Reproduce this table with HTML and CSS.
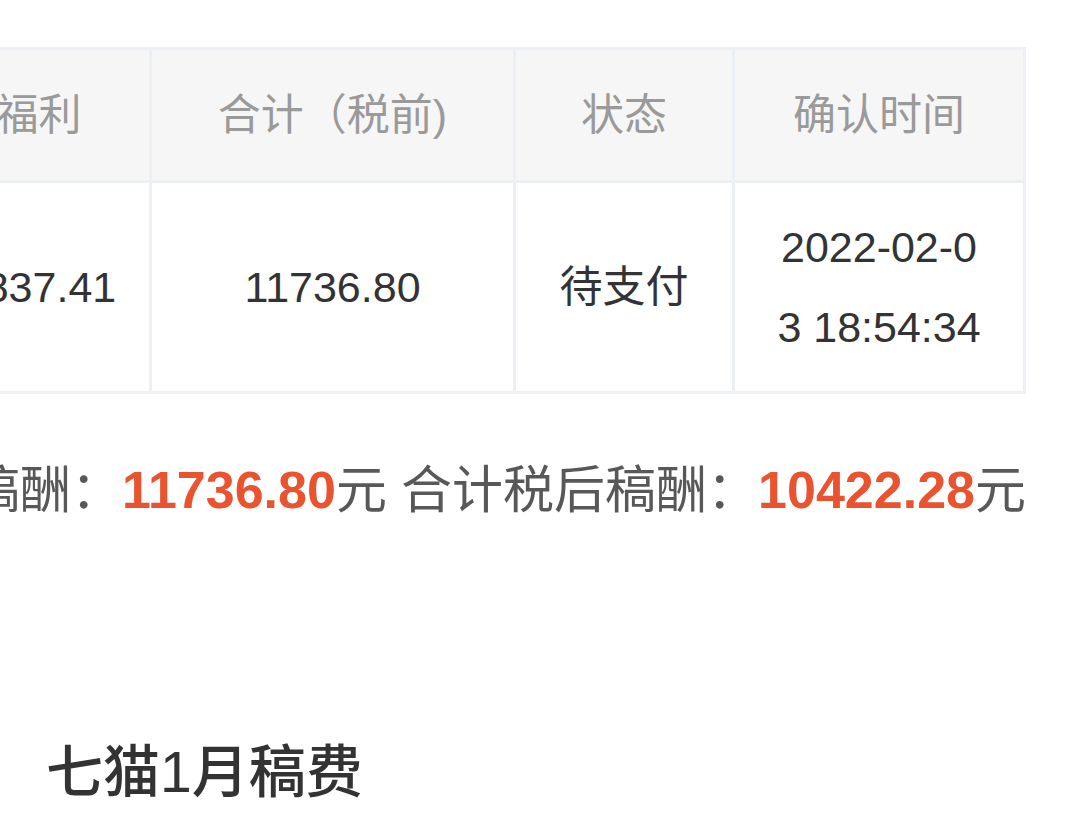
FILE: index.html
```html
<!DOCTYPE html>
<html lang="zh-CN">
<head>
  <meta charset="UTF-8" />
  <title>稿费明细</title>
  <link rel="stylesheet" href="styles.css">
</head>
<body>
  <div class="page">
    <div class="table-wrap">
      <table class="fee-table">
        <thead>
          <tr>
            <th class="col-bonus">福利</th>
            <th class="col-total">合计（税前)</th>
            <th class="col-status">状态</th>
            <th class="col-time">确认时间</th>
          </tr>
        </thead>
        <tbody>
          <tr>
            <td>1837.41</td>
            <td>11736.80</td>
            <td>待支付</td>
            <td class="time">2022-02-03 18:54:34</td>
          </tr>
        </tbody>
      </table>
    </div>

    <div class="summary">
      <span class="summary-text">合计税前稿酬：<span class="money">11736.80</span>元 合计税后稿酬：<span class="money">10422.28</span>元</span>
    </div>

    <h2 class="month-title">七猫1月稿费</h2>
  </div>
</body>
</html>
```

FILE: styles.css
```css
body {
  margin: 0;
  background: #fff;
  font-family: "Liberation Sans", "Noto Sans CJK SC", sans-serif;
  color: #333;
  overflow: hidden;
}
.page {
  padding: 47px 54px 0 46px;
}
.table-wrap {
  margin-left: -46px;
  overflow: hidden;
}
.fee-table {
  margin-left: -72px;
  width: 1098px;
  table-layout: fixed;
  border-collapse: separate;
  border-spacing: 0;
  border-top: 3px solid #eceff3;
  font-size: 43px;
}
.col-bonus { width: 224px; }
.col-total { width: 364px; }
.col-status { width: 219px; }
.col-time { width: 291px; }
th, td {
  box-sizing: border-box;
  border-right: 3px solid #eceff3;
  border-bottom: 3px solid #eceff3;
  text-align: center;
  font-weight: normal;
}
th {
  background: #f6f6f6;
  color: #9a9a9a;
  line-height: 60px;
  padding: 35px 0;
}
td {
  background: #fff;
  color: #333;
  line-height: 80px;
  padding: 24px 0;
}
td.time {
  padding: 24px 40px;
  word-break: break-all;
}
.summary {
  margin: 66px 0 0;
  display: flex;
  justify-content: flex-end;
  font-size: 51px;
  line-height: 60px;
  color: #585858;
}
.summary-text {
  flex-shrink: 0;
  white-space: nowrap;
}
.money {
  color: #e9532f;
  font-size: 52px;
  font-weight: bold;
}
.month-title {
  margin: 216px 0 0;
  font-size: 57px;
  line-height: 70px;
  font-weight: 500;
  color: #333;
}
```
